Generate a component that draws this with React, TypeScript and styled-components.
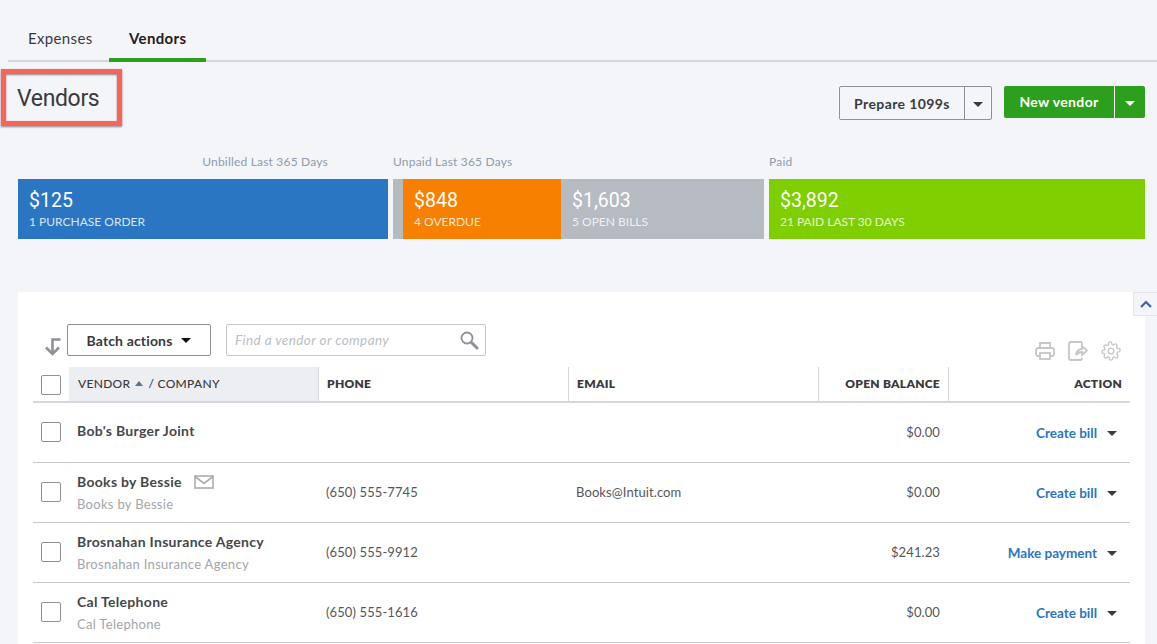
import React from "react";
import styled, { createGlobalStyle } from "styled-components";

const Global = createGlobalStyle`
  html, body { margin: 0; padding: 0; background: #f4f5f8; }
  body { font-family: Lato, "Open Sans", sans-serif; color: #393a3d; width: 1157px; height: 644px; overflow: hidden; }
`;

const Page = styled.div`
  position: relative;
  width: 1157px;
  height: 644px;
  overflow: hidden;
  background: #f4f5f8;
`;

const Tabs = styled.div`
  display: flex;
  height: 60px;
  margin-left: 8px;
  border-bottom: 2px solid #d4d7dc;
  box-sizing: content-box;
`;

const Tab = styled.div<{ $active?: boolean }>`
  height: 62px;
  box-sizing: border-box;
  width: ${(p) => (p.$active ? "97px" : "101px")};
  padding-top: 29px;
  padding-left: 20px;
  font-size: 15px;
  line-height: 18px;
  letter-spacing: 0.35px;
  font-weight: ${(p) => (p.$active ? 700 : 400)};
  color: ${(p) => (p.$active ? "#1f2023" : "#393a3d")};
  border-bottom: ${(p) => (p.$active ? "4px solid #2ca01c" : "none")};
`;

const Head = styled.div`
  display: flex;
  justify-content: space-between;
  align-items: flex-start;
  height: 92px;
  padding: 23px 12px 0 17px;
  box-sizing: border-box;
`;

const Title = styled.h1`
  margin: 0;
  font-family: Roboto, sans-serif;
  font-weight: 400;
  font-size: 23px;
  line-height: 28px;
  letter-spacing: -0.35px;
  color: #393a3d;
`;

const Actions = styled.div`
  display: flex;
  gap: 12px;
  margin-top: 1px;
`;

const OutlineSplit = styled.div`
  display: flex;
  height: 34px;
  width: 153px;
  box-sizing: border-box;
  border: 1px solid #8d9096;
  border-radius: 2px;
`;

const OutlineMain = styled.div`
  flex: 1;
  display: flex;
  align-items: center;
  justify-content: center;
  font-size: 14px;
  font-weight: 700;
  letter-spacing: 0.4px;
  color: #393a3d;
  border-right: 1px solid #8d9096;
`;

const Caret = styled.span<{ $color?: string }>`
  display: inline-block;
  width: 0;
  height: 0;
  border-left: 5px solid transparent;
  border-right: 5px solid transparent;
  border-top: 5px solid ${(p) => p.$color ?? "#393a3d"};
`;

const CaretCell = styled.div<{ $w: number }>`
  width: ${(p) => p.$w}px;
  display: flex;
  align-items: center;
  justify-content: center;
  padding-top: 2px;
  box-sizing: border-box;
`;

const GreenSplit = styled.div`
  display: flex;
  height: 32px;
  width: 141px;
  border-radius: 2px;
  background: #2ca01c;
  color: #fff;
  overflow: hidden;
`;

const GreenMain = styled.div`
  flex: 1;
  display: flex;
  align-items: center;
  justify-content: center;
  font-size: 14px;
  font-weight: 700;
  letter-spacing: 0.35px;
  padding-bottom: 2px;
  box-sizing: border-box;
  border-right: 1px solid #fff;
`;

const Money = styled.div`
  display: flex;
  padding-left: 18px;
  height: 85px;
`;

const MoneyCol = styled.div<{ $w: number; $mr?: number }>`
  width: ${(p) => p.$w}px;
  margin-right: ${(p) => p.$mr ?? 0}px;
  display: flex;
  flex-direction: column;
`;

const MoneyLabel = styled.div<{ $right?: boolean }>`
  height: 25px;
  font-size: 12px;
  line-height: 16px;
  letter-spacing: 0.2px;
  color: #8d9bb0;
  text-align: ${(p) => (p.$right ? "right" : "left")};
  padding-right: ${(p) => (p.$right ? "60px" : "0")};
`;

const Bars = styled.div`
  display: flex;
  height: 60px;
`;

const Spacer = styled.div`
  width: 10px;
  background: #b6bac1;
`;

const Bar = styled.div<{ $bg: string; $w?: number }>`
  ${(p) => (p.$w ? `width: ${p.$w}px;` : "flex: 1;")}
  background-color: ${(p) => p.$bg};
  color: #fff;
  padding: 10px 0 0 11px;
  box-sizing: border-box;
`;

const Amount = styled.div`
  font-family: Roboto, sans-serif;
  font-size: 19.5px;
  line-height: 24px;
`;

const Sub = styled.div`
  font-size: 12px;
  line-height: 16px;
  margin-top: 1px;
  color: rgba(255, 255, 255, 0.82);
`;

const Panel = styled.div`
  position: relative;
  margin: 53px 12px 0 18px;
  background: #fff;
  height: 360px;
  padding: 32px 15px 0 15px;
  box-sizing: border-box;
`;

const Collapse = styled.div`
  position: absolute;
  top: 0;
  right: -12px;
  width: 24px;
  height: 24px;
  box-sizing: border-box;
  background: #f4f5f8;
  border: 1px solid #e3e5e8;
  border-right: none;
  display: flex;
  align-items: center;
  justify-content: center;
`;

const Toolbar = styled.div`
  display: flex;
  height: 43px;
  align-items: flex-start;
`;

const BatchArrow = styled.div`
  width: 34px;
  padding: 14px 0 0 12px;
  box-sizing: border-box;
`;

const BatchButton = styled.div`
  width: 144px;
  height: 32px;
  box-sizing: border-box;
  border: 1px solid #8d9096;
  border-radius: 2px;
  display: flex;
  align-items: center;
  justify-content: center;
  gap: 9px;
  font-size: 14px;
  font-weight: 700;
  letter-spacing: 0.15px;
  color: #393a3d;
`;

const Search = styled.div`
  margin-left: 15px;
  width: 260px;
  height: 32px;
  box-sizing: border-box;
  border: 1px solid #c4c6ca;
  border-radius: 2px;
  display: flex;
  align-items: center;
  justify-content: space-between;
  padding: 0 6px 0 8px;
`;

const Placeholder = styled.span`
  font-style: italic;
  font-size: 13.5px;
  letter-spacing: 0.4px;
  color: #babec5;
`;

const Tools = styled.div`
  margin-left: auto;
  display: flex;
  gap: 13px;
  padding: 17px 9px 0 0;
`;

const columns = "36px 250px 250px 250px 130px 1fr";

const HeaderRow = styled.div`
  display: grid;
  grid-template-columns: ${columns};
  height: 34px;
  border-bottom: 2px solid #d4d7dc;
  box-sizing: content-box;
`;

const HeaderCell = styled.div<{ $sorted?: boolean; $align?: string; $plain?: boolean }>`
  display: flex;
  align-items: center;
  gap: 5px;
  justify-content: ${(p) => p.$align ?? "flex-start"};
  padding: 0 8px 2px;
  box-sizing: border-box;
  font-size: 12px;
  font-weight: ${(p) => (p.$sorted ? 500 : 800)};
  letter-spacing: ${(p) => (p.$sorted ? "0.3px" : "0.25px")};
  color: #393a3d;
  background: ${(p) => (p.$sorted ? "#eceef1" : "transparent")};
  border-right: ${(p) => (p.$plain ? "none" : "1px solid #d4d7dc")};
  ${(p) => (p.$sorted ? "padding-left: 9px;" : "")}
`;

const SortCaret = styled.span`
  display: inline-block;
  width: 0;
  height: 0;
  border-left: 4px solid transparent;
  border-right: 4px solid transparent;
  border-bottom: 5px solid #5a7391;
`;

const CheckCell = styled.div<{ $head?: boolean }>`
  display: flex;
  align-items: center;
  padding-left: 8px;
  padding-bottom: ${(p) => (p.$head ? "0" : "1px")};
  padding-top: ${(p) => (p.$head ? "2px" : "0")};
`;

const Box = styled.div`
  width: 20px;
  height: 20px;
  box-sizing: border-box;
  border: 1px solid #8d9096;
  border-radius: 2px;
  background: #fff;
`;

const Row = styled.div`
  display: grid;
  grid-template-columns: ${columns};
  height: 59px;
  border-bottom: 1px solid #c9cbd0;
  box-sizing: content-box;
`;

const VendorCell = styled.div`
  display: flex;
  flex-direction: column;
  justify-content: center;
  padding: 0 0 3px 8px;
`;

const VendorName = styled.div`
  display: flex;
  align-items: center;
  gap: 12px;
  font-size: 14px;
  font-weight: 700;
  letter-spacing: 0.3px;
  line-height: 18px;
  color: #45474b;
`;

const Company = styled.div`
  font-size: 13px;
  letter-spacing: 0.3px;
  line-height: 16px;
  margin-top: 5px;
  margin-bottom: -3px;
  color: #a3a5aa;
`;

const Cell = styled.div<{ $right?: boolean }>`
  display: flex;
  align-items: center;
  justify-content: ${(p) => (p.$right ? "flex-end" : "flex-start")};
  padding: ${(p) => (p.$right ? "0 9px 2px 0" : "0 0 2px 7px")};
  font-size: 13px;
  letter-spacing: 0.1px;
  color: #55575b;
`;

const ActionCell = styled.div`
  display: flex;
  align-items: center;
  justify-content: flex-end;
  gap: 10px;
  padding-right: 13px;
  padding-top: 1px;
`;

const ActionLink = styled.a`
  font-size: 13.5px;
  font-weight: 700;
  color: #2b76c3;
`;

const Highlight = styled.div`
  position: absolute;
  left: 1px;
  top: 69px;
  width: 121px;
  height: 57px;
  box-sizing: border-box;
  border: 5px solid #fb6358;
  box-shadow: 0 1px 2px rgba(0, 0, 0, 0.45), inset 0 1px 2px rgba(0, 0, 0, 0.45);
`;

const MailIcon = () => (
  <svg width="20" height="14" viewBox="0 0 20 14" fill="none" stroke="#a9acb1" strokeWidth="1.6">
    <rect x="1" y="1" width="18" height="12" />
    <path d="M1 1.5 L10 8.5 L19 1.5" />
  </svg>
);

const vendors = [
  { name: "Bob's Burger Joint", balance: "$0.00", action: "Create bill" },
  { name: "Books by Bessie", company: "Books by Bessie", mail: true, phone: "(650) 555-7745", email: "Books@Intuit.com", balance: "$0.00", action: "Create bill" },
  { name: "Brosnahan Insurance Agency", company: "Brosnahan Insurance Agency", phone: "(650) 555-9912", balance: "$241.23", action: "Make payment" },
  { name: "Cal Telephone", company: "Cal Telephone", phone: "(650) 555-1616", balance: "$0.00", action: "Create bill" },
];

export default function App() {
  return (
    <Page>
      <Global />
      <Tabs>
        <Tab>Expenses</Tab>
        <Tab $active>Vendors</Tab>
      </Tabs>
      <Head>
        <Title>Vendors</Title>
        <Actions>
          <OutlineSplit>
            <OutlineMain>Prepare 1099s</OutlineMain>
            <CaretCell $w={26}><Caret /></CaretCell>
          </OutlineSplit>
          <GreenSplit>
            <GreenMain>New vendor</GreenMain>
            <CaretCell $w={30}><Caret $color="#fff" /></CaretCell>
          </GreenSplit>
        </Actions>
      </Head>
      <Money>
        <MoneyCol $w={370} $mr={5}>
          <MoneyLabel $right>Unbilled Last 365 Days</MoneyLabel>
          <Bars>
            <Bar $bg="#2b76c3">
              <Amount>$125</Amount>
              <Sub>1 PURCHASE ORDER</Sub>
            </Bar>
          </Bars>
        </MoneyCol>
        <MoneyCol $w={371} $mr={5}>
          <MoneyLabel>Unpaid Last 365 Days</MoneyLabel>
          <Bars>
            <Spacer />
            <Bar $bg="#f88000" $w={158}>
              <Amount>$848</Amount>
              <Sub>4 OVERDUE</Sub>
            </Bar>
            <Bar $bg="#b6bac1">
              <Amount>$1,603</Amount>
              <Sub>5 OPEN BILLS</Sub>
            </Bar>
          </Bars>
        </MoneyCol>
        <MoneyCol $w={376}>
          <MoneyLabel>Paid</MoneyLabel>
          <Bars>
            <Bar $bg="#7fce00">
              <Amount>$3,892</Amount>
              <Sub>21 PAID LAST 30 DAYS</Sub>
            </Bar>
          </Bars>
        </MoneyCol>
      </Money>
      <Panel>
        <Collapse>
          <svg width="14" height="10" viewBox="0 0 14 10" fill="none" stroke="#3f62a8" strokeWidth="2.2">
            <path d="M2 8 L7 3 L12 8" />
          </svg>
        </Collapse>
        <Toolbar>
          <BatchArrow>
            <svg width="16" height="18" viewBox="0 0 16 18" fill="none" stroke="#8d9096" strokeWidth="2.6">
              <path d="M15.5 1.5 H7.5 V16" />
              <path d="M1 9.5 L7.5 16 L14 9.5" />
            </svg>
          </BatchArrow>
          <BatchButton>
            Batch actions <Caret $color="#111" />
          </BatchButton>
          <Search>
            <Placeholder>Find a vendor or company</Placeholder>
            <svg width="20" height="20" viewBox="0 0 20 20" fill="none" stroke="#8d9096">
              <circle cx="8" cy="8" r="5.5" strokeWidth="1.8" />
              <path d="M12.5 12.5 L18 18" strokeWidth="3" strokeLinecap="round" />
            </svg>
          </Search>
          <Tools>
            <svg width="20" height="20" viewBox="0 0 20 20" fill="none" stroke="#c4c6ca" strokeWidth="1.8">
              <path d="M5 7 V2 H15 V7" />
              <rect x="1" y="7" width="18" height="8" rx="2" />
              <rect x="5" y="12" width="10" height="6" fill="#fff" />
            </svg>
            <svg width="20" height="20" viewBox="0 0 20 20" fill="none" stroke="#c4c6ca" strokeWidth="1.8">
              <path d="M13 1 H3 Q1 1 1 3 V17 Q1 19 3 19 H12 Q14 19 14 17" />
              <path d="M13 1 Q14 1 14 4" />
              <path d="M8 14 Q9 8 14 8 V5 L19 9.5 L14 14 V11 Q10 11 8 14 Z" />
            </svg>
            <svg width="20" height="20" viewBox="0 0 24 24" fill="none" stroke="#c4c6ca" strokeWidth="1.6">
              <circle cx="12" cy="12" r="3.4" />
              <path d="M19.4 15a1.65 1.65 0 0 0 .33 1.82l.06.06a2 2 0 1 1-2.83 2.83l-.06-.06a1.65 1.65 0 0 0-2.82 1.17V21a2 2 0 1 1-4 0v-.09a1.65 1.65 0 0 0-2.82-1.17l-.06.06a2 2 0 1 1-2.83-2.83l.06-.06A1.65 1.65 0 0 0 3.09 15H3a2 2 0 1 1 0-4h.09a1.65 1.65 0 0 0 1.17-2.82l-.06-.06a2 2 0 1 1 2.83-2.83l.06.06A1.65 1.65 0 0 0 9 3.09V3a2 2 0 1 1 4 0v.09a1.65 1.65 0 0 0 2.82 1.17l.06-.06a2 2 0 1 1 2.83 2.83l-.06.06A1.65 1.65 0 0 0 20.91 9H21a2 2 0 1 1 0 4h-.09a1.65 1.65 0 0 0-1.51 2z" />
            </svg>
          </Tools>
        </Toolbar>
        <HeaderRow>
          <CheckCell $head><Box /></CheckCell>
          <HeaderCell $sorted>VENDOR <SortCaret /> / COMPANY</HeaderCell>
          <HeaderCell>PHONE</HeaderCell>
          <HeaderCell>EMAIL</HeaderCell>
          <HeaderCell $align="flex-end">OPEN BALANCE</HeaderCell>
          <HeaderCell $align="flex-end" $plain>ACTION</HeaderCell>
        </HeaderRow>
        {vendors.map((v) => (
          <Row key={v.name}>
            <CheckCell><Box /></CheckCell>
            <VendorCell>
              <VendorName>
                {v.name}
                {v.mail && <MailIcon />}
              </VendorName>
              {v.company && <Company>{v.company}</Company>}
            </VendorCell>
            <Cell>{v.phone}</Cell>
            <Cell>{v.email}</Cell>
            <Cell $right>{v.balance}</Cell>
            <ActionCell>
              <ActionLink>{v.action}</ActionLink>
              <Caret />
            </ActionCell>
          </Row>
        ))}
      </Panel>
      <Highlight />
    </Page>
  );
}
